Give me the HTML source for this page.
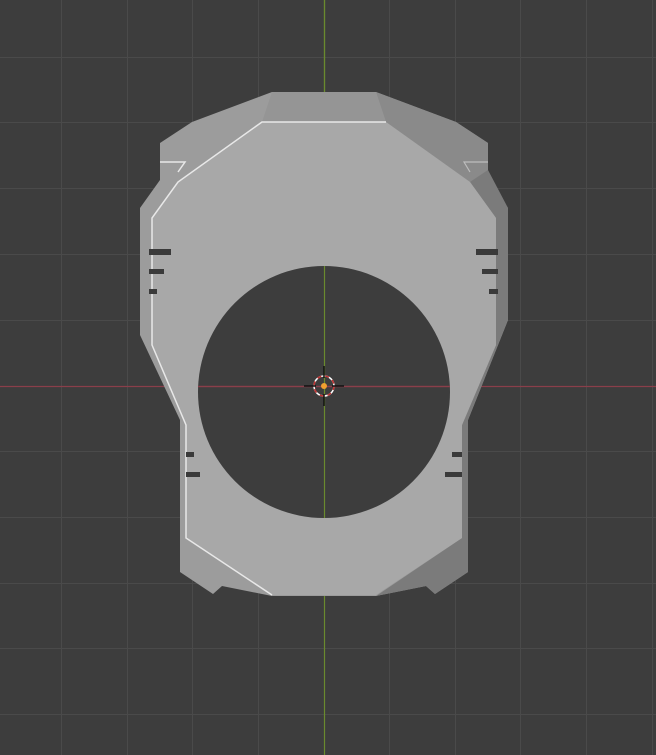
<!DOCTYPE html>
<html><head><style>html,body{margin:0;padding:0;background:#3d3d3d;overflow:hidden}svg{display:block}</style></head>
<body>
<svg width="656" height="755" viewBox="0 0 656 755" xmlns="http://www.w3.org/2000/svg">
<rect width="656" height="755" fill="#3d3d3d"/>
<g stroke="#4a4a4a" stroke-width="1">
<line x1="61.5" y1="0" x2="61.5" y2="755"/><line x1="127.5" y1="0" x2="127.5" y2="755"/><line x1="192.5" y1="0" x2="192.5" y2="755"/><line x1="258.5" y1="0" x2="258.5" y2="755"/><line x1="389.5" y1="0" x2="389.5" y2="755"/><line x1="455.5" y1="0" x2="455.5" y2="755"/><line x1="520.5" y1="0" x2="520.5" y2="755"/><line x1="586.5" y1="0" x2="586.5" y2="755"/><line x1="652.5" y1="0" x2="652.5" y2="755"/>
<line y1="57.5" x1="0" y2="57.5" x2="656"/><line y1="122.5" x1="0" y2="122.5" x2="656"/><line y1="188.5" x1="0" y2="188.5" x2="656"/><line y1="254.5" x1="0" y2="254.5" x2="656"/><line y1="320.5" x1="0" y2="320.5" x2="656"/><line y1="451.5" x1="0" y2="451.5" x2="656"/><line y1="517.5" x1="0" y2="517.5" x2="656"/><line y1="583.5" x1="0" y2="583.5" x2="656"/><line y1="648.5" x1="0" y2="648.5" x2="656"/><line y1="714.5" x1="0" y2="714.5" x2="656"/>
</g>
<line x1="0" y1="386.5" x2="656" y2="386.5" stroke="#8a3f4a" stroke-width="1.2"/>
<line x1="324.5" y1="0" x2="324.5" y2="755" stroke="#6a8a2e" stroke-width="1.2"/>
<!-- silhouette -->
<polygon points="272,92 376,92 456,122 488,143 488,180 508,208 508,320 468,420 468,572 435,594 426,586 376,596 272,596 222,586 213,594 180,572 180,420 140,335 140,208 160,180 160,143 192,122" fill="#9c9c9c"/>
<!-- top cap -->
<polygon points="272,92 376,92 386,122 262,122" fill="#959595"/>
<polygon points="376,92 456,122 488,143 488,180 470,182 386,122" fill="#8a8a8a"/>
<!-- right side darker -->
<polygon points="470,182 488,170 508,208 508,320 468,420 468,572 435,594 426,586 376,596 462,538 462,425 496,345 496,218" fill="#7b7b7b"/>
<!-- front face -->
<polygon points="262,122 386,122 470,182 496,218 496,345 462,425 462,538 376,595 272,595 186,538 186,425 152,345 152,218 178,182" fill="#a8a8a8"/>
<g fill="none" stroke="#e8e8e8" stroke-width="1.5">
<polyline points="386,122 262,122 178,182 152,218 152,345 186,425 186,538 272,595"/>
<polyline points="160,162 185,162 178,172"/>
</g>
<polyline points="488,162 464,162 470,172" fill="none" stroke="#bdbdbd" stroke-width="1.2"/>
<!-- hole -->
<circle cx="324" cy="392" r="126" fill="#3d3d3d"/>
<line x1="0" y1="386.5" x2="656" y2="386.5" stroke="#8a3f4a" stroke-width="1.2" clip-path="url(#c)"/>
<clipPath id="c"><circle cx="324" cy="392" r="126"/></clipPath>
<line x1="324.5" y1="266" x2="324.5" y2="518" stroke="#6a8a2e" stroke-width="1.2"/>
<line x1="198" y1="386.5" x2="450" y2="386.5" stroke="#8a3f4a" stroke-width="1.2"/>
<line x1="324.5" y1="0" x2="324.5" y2="92" stroke="#6a8a2e" stroke-width="1.2"/>
<!-- slots -->
<g fill="#3a3a3a">
<rect x="149" y="249" width="22" height="6"/><rect x="149" y="269" width="15" height="5"/><rect x="149" y="289" width="8" height="5"/>
<rect x="476" y="249" width="22" height="6"/><rect x="482" y="269" width="16" height="5"/><rect x="489" y="289" width="9" height="5"/>
<rect x="186" y="452" width="8" height="5"/><rect x="186" y="472" width="14" height="5"/>
<rect x="452" y="452" width="10" height="5"/><rect x="445" y="472" width="17" height="5"/>
</g>
<!-- cursor -->
<g>
<circle cx="324" cy="386" r="10" fill="none" stroke="#fff" stroke-width="1.5"/>
<circle cx="324" cy="386" r="10" fill="none" stroke="#c03030" stroke-width="1.5" stroke-dasharray="4 4"/>
<line x1="304" y1="386" x2="316" y2="386" stroke="#111" stroke-width="1.5"/><line x1="332" y1="386" x2="344" y2="386" stroke="#111" stroke-width="1.5"/>
<line x1="324" y1="366" x2="324" y2="378" stroke="#111" stroke-width="1.5"/><line x1="324" y1="394" x2="324" y2="406" stroke="#111" stroke-width="1.5"/>
<circle cx="324" cy="386" r="3" fill="#f0a030"/>
</g>
</svg>
</body></html>
